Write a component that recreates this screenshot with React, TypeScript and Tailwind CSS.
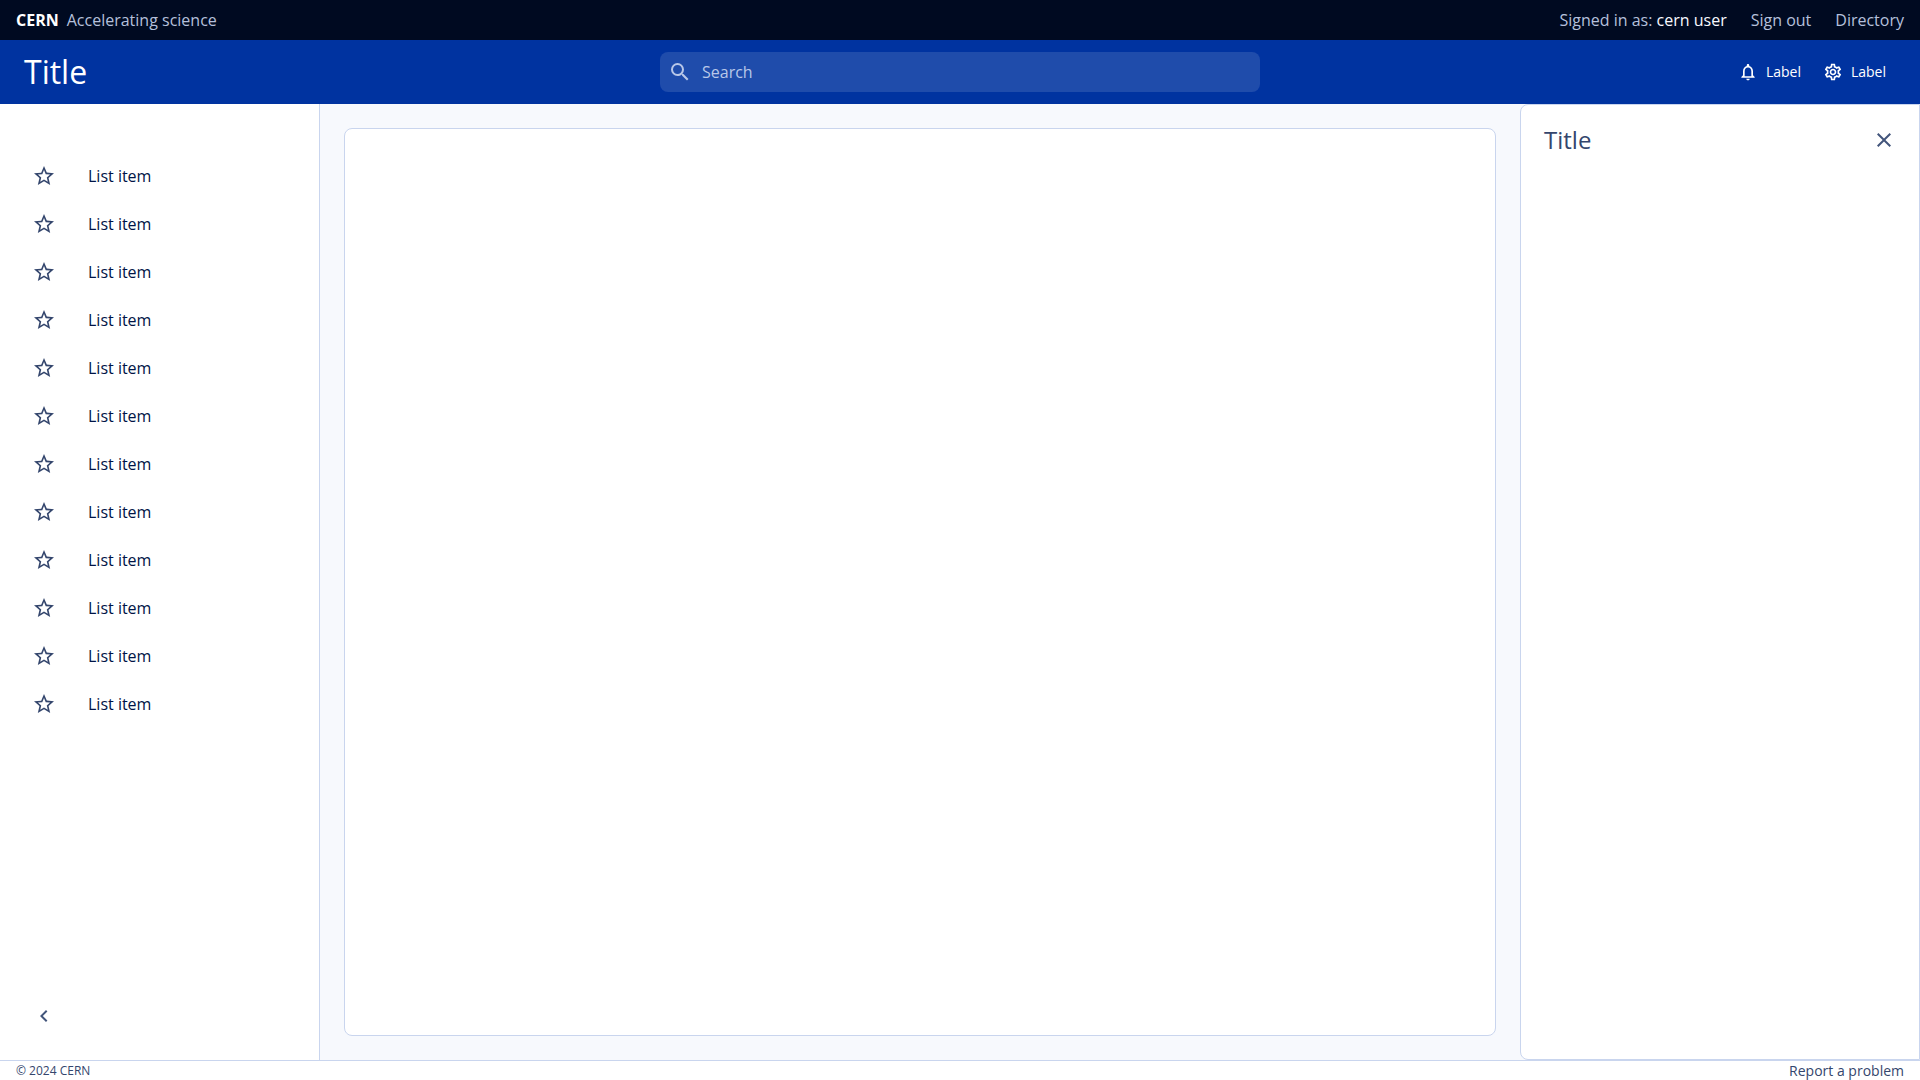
import {
  MdChevronLeft,
  MdClose,
  MdOutlineNotifications,
  MdOutlineSettings,
  MdSearch,
  MdStarBorder,
} from 'react-icons/md';

const navItems = Array.from({ length: 12 }, (_, i) => ({ id: i, label: 'List item' }));

const actions = [
  { id: 'notifications', label: 'Label', icon: MdOutlineNotifications },
  { id: 'settings', label: 'Label', icon: MdOutlineSettings },
];

function TopBar() {
  return (
    <div className="flex h-10 items-center justify-between bg-[#000a21] px-4 text-[#b5c0dc]">
      <a href="#" className="flex items-center gap-2">
        <span className="font-bold text-white">CERN</span>
        <span>Accelerating science</span>
      </a>
      <div className="flex items-center gap-6">
        <span>
          Signed in as: <a href="#" className="text-[#f8f9ff]">cern user</a>
        </span>
        <a href="#">Sign out</a>
        <a href="#">Directory</a>
      </div>
    </div>
  );
}

function Header() {
  return (
    <header className="grid h-16 grid-cols-[1fr_600px_1fr] items-center bg-[#0033a0] text-white">
      <h1 className="pl-6 text-[32px] leading-10">Title</h1>
      <label className="flex h-10 items-center gap-2.5 rounded-lg bg-[#1f4cab] px-2 text-[#b8c7e8]">
        <MdSearch className="size-6" />
        <input
          type="search"
          aria-label="Search"
          placeholder="Search"
          className="flex-1 bg-transparent outline-none placeholder:text-[#b8c7e8]"
        />
      </label>
      <div className="flex items-center justify-end gap-[22px] pr-[34px]">
        {actions.map(({ id, label, icon: Icon }) => (
          <button key={id} type="button" className="flex items-center gap-2 text-sm font-medium">
            <Icon className="size-5" />
            {label}
          </button>
        ))}
      </div>
    </header>
  );
}

function Sidebar() {
  return (
    <aside className="flex w-80 shrink-0 flex-col justify-between border-r border-[#c9d5ee] bg-white pt-12 pb-6">
      <nav>
        <ul>
          {navItems.map((item) => (
            <li key={item.id}>
              <a href="#" className="flex h-12 items-center gap-8 pl-8 text-[#001446]">
                <MdStarBorder className="size-6 text-[#34466d]" />
                {item.label}
              </a>
            </li>
          ))}
        </ul>
      </nav>
      <button type="button" aria-label="Collapse menu" className="ml-6 flex size-10 items-center justify-center text-[#42557b]">
        <MdChevronLeft className="size-6" />
      </button>
    </aside>
  );
}

function SidePanel() {
  return (
    <aside className="w-100 shrink-0 rounded-l-lg border border-[#c9d5ee] bg-white">
      <div className="flex items-center justify-between pt-[15px] pr-[15px] pl-[23px] text-[#34466d]">
        <h2 className="text-2xl">Title</h2>
        <button type="button" aria-label="Close" className="flex size-10 items-center justify-center text-[#42557b]">
          <MdClose className="size-6" />
        </button>
      </div>
    </aside>
  );
}

export default function App() {
  return (
    <div className="flex min-h-screen flex-col bg-white font-['Open_Sans',sans-serif] text-base">
      <TopBar />
      <Header />
      <div className="flex flex-1 bg-[#f7f9fd]">
        <Sidebar />
        <main className="flex flex-1 p-6">
          <section className="flex-1 rounded-lg border border-[#c9d5ee] bg-white" />
        </main>
        <SidePanel />
      </div>
      <footer className="flex h-5 items-center justify-between border-t border-[#c9d5ee] px-4 text-[#34466d]">
        <span className="text-xs">© 2024 CERN</span>
        <a href="#" className="text-sm">Report a problem</a>
      </footer>
    </div>
  );
}
